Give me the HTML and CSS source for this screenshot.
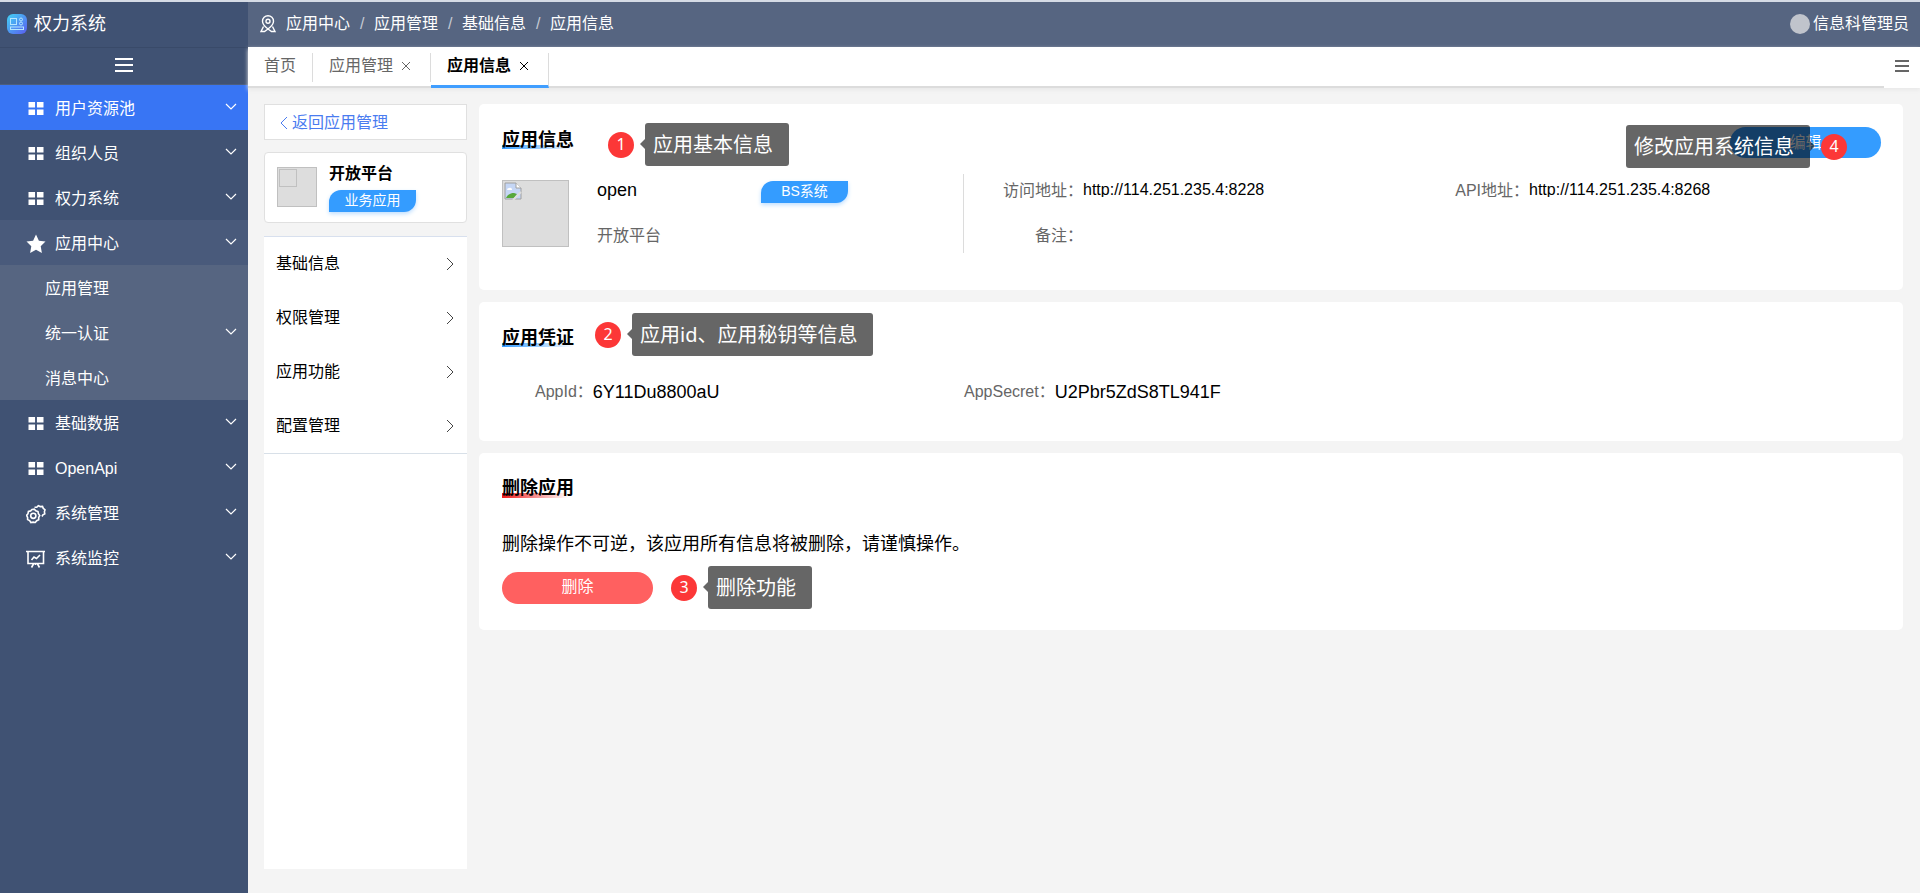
FILE: index.html
```html
<!DOCTYPE html>
<html lang="zh-CN">
<head>
<meta charset="UTF-8">
<title>权力系统</title>
<link rel="stylesheet" href="styles.css">
</head>
<body>
<svg class="sprite" aria-hidden="true">
  <symbol id="grid" viewBox="0 0 16 16"><path d="M0 1h7v6H0zM9 1h7v6H9zM0 9h7v6H0zM9 9h7v6H9z" fill="currentColor"/></symbol>
  <symbol id="down" viewBox="0 0 12 12"><path d="M1 3l5 5 5-5" fill="none" stroke="currentColor" stroke-width="1.2"/></symbol>
  <symbol id="right" viewBox="0 0 12 12"><path d="M3 0l6 6-6 6" fill="none" stroke="currentColor"/></symbol>
  <symbol id="close" viewBox="0 0 10 10"><path d="M1 1l8 8M9 1l-8 8" fill="none" stroke="currentColor"/></symbol>
</svg>
<div class="app">
  <aside class="sidebar">
    <div class="brand">
      <svg class="brand-logo" viewBox="0 0 20 20"><defs><linearGradient id="lg" x1="0" y1="0" x2="1" y2="1"><stop offset="0" stop-color="#42d3f5"/><stop offset="1" stop-color="#5a5cf0"/></linearGradient></defs><rect width="20" height="20" rx="6" fill="url(#lg)"/><g fill="none" stroke="#b5e6ff" stroke-width="1"><rect x="3.500" y="4.500" width="6" height="6"/><circle cx="14" cy="5.500" r="1.500"/><circle cx="14" cy="9.500" r="1.500"/><rect x="3.500" y="13" width="13" height="2.500"/></g></svg>
      <span>权力系统</span>
    </div>
    <button class="collapse" aria-label="折叠菜单"><svg width="18" height="16" viewBox="0 0 18 16"><path d="M0 2h18M0 8h18M0 14h18" stroke="currentColor" stroke-width="2"/></svg></button>
    <nav class="menu">
      <a class="item active" href="#"><svg class="ico"><use href="#grid"/></svg><span>用户资源池</span><svg class="arrow"><use href="#down"/></svg></a>
      <a class="item" href="#"><svg class="ico"><use href="#grid"/></svg><span>组织人员</span><svg class="arrow"><use href="#down"/></svg></a>
      <a class="item" href="#"><svg class="ico"><use href="#grid"/></svg><span>权力系统</span><svg class="arrow"><use href="#down"/></svg></a>
      <a class="item open" href="#"><svg class="ico large" viewBox="0 0 20 20"><path d="M10 0.500l2.900 6.300 6.600.8-4.800 4.600 1.200 6.800L10 15.700 4.100 19l1.200-6.800L.5 7.600l6.600-.8z" fill="currentColor"/></svg><span>应用中心</span><svg class="arrow"><use href="#down"/></svg></a>
      <div class="submenu">
        <a class="item" href="#"><span>应用管理</span></a>
        <a class="item" href="#"><span>统一认证</span><svg class="arrow"><use href="#down"/></svg></a>
        <a class="item" href="#"><span>消息中心</span></a>
      </div>
      <a class="item" href="#"><svg class="ico"><use href="#grid"/></svg><span>基础数据</span><svg class="arrow"><use href="#down"/></svg></a>
      <a class="item" href="#"><svg class="ico"><use href="#grid"/></svg><span>OpenApi</span><svg class="arrow"><use href="#down"/></svg></a>
      <a class="item" href="#"><svg class="ico large" viewBox="0 0 20 20" fill="none" stroke="currentColor" stroke-width="1.600"><path d="M6 5.500l2.300-.3 1.500 1.600 2.200.7.400 2.200 1.300 1.800-1 2 0 2.200-2 1-1.400 1.800-2.200-.4-2.200.4-1.300-1.900-2-1 0-2.200-1-2 1.400-1.700.4-2.300 2.200-.5z"/><circle cx="7.300" cy="11.800" r="2.600"/><path d="M8.500 3.200l2.300 0 1.500-1.500 2 .9 2.200-.2.800 2 1.700 1.300-.6 2.100.4 2.100-1.900 1-.9 1.600"/></svg><span>系统管理</span><svg class="arrow"><use href="#down"/></svg></a>
      <a class="item" href="#"><svg class="ico large" viewBox="0 0 20 20" fill="none" stroke="currentColor" stroke-width="1.600"><path d="M0 2.500h19M2 3v11.500h15.500V3M9.500 14.500V16M7.500 15l-2 3.500M11.500 15l2 3.500M5.500 11L8 8l2.500 1.500L14 6"/></svg><span>系统监控</span><svg class="arrow"><use href="#down"/></svg></a>
    </nav>
  </aside>
  <div class="main">
    <header class="topbar">
      <svg width="16" height="18" viewBox="0 0 16 18" fill="none" stroke="currentColor" stroke-width="1.400"><path d="M8 14C4 11 2.500 8.800 2.500 6.200a5.500 5.500 0 0111 0C13.500 8.800 12 11 8 14z"/><circle cx="8" cy="6.200" r="2"/><path d="M3.500 11.500L1 16.500h3.500L8 14l3.500 2.500H15l-2.500-5"/></svg>
      <nav class="crumbs"><a href="#">应用中心</a><i>/</i><a href="#">应用管理</a><i>/</i><a href="#">基础信息</a><i>/</i><a href="#">应用信息</a></nav>
      <div class="user"><span class="avatar"></span><span>信息科管理员</span></div>
    </header>
    <div class="tabs">
      <a class="tab home" href="#">首页</a>
      <a class="tab" href="#">应用管理<svg class="close"><use href="#close"/></svg></a>
      <a class="tab current" href="#">应用信息<svg class="close"><use href="#close"/></svg></a>
      <button class="tabs-menu" aria-label="标签菜单"><svg width="14" height="12" viewBox="0 0 14 12"><path d="M0 1h14M0 6h14M0 11h14" stroke="currentColor" stroke-width="2"/></svg></button>
    </div>
    <div class="content">
      <section class="side">
        <a class="back" href="#"><svg width="8" height="12" viewBox="0 0 8 12"><path d="M7 0L1 6l6 6" fill="none" stroke="currentColor"/></svg><span>返回应用管理</span></a>
        <div class="app-card">
          <div class="thumb"><span></span></div>
          <div><h3>开放平台</h3><span class="tag">业务应用</span></div>
        </div>
        <nav class="side-menu">
          <a href="#">基础信息<svg class="arrow"><use href="#right"/></svg></a>
          <a href="#">权限管理<svg class="arrow"><use href="#right"/></svg></a>
          <a href="#">应用功能<svg class="arrow"><use href="#right"/></svg></a>
          <a href="#">配置管理<svg class="arrow"><use href="#right"/></svg></a>
        </nav>
        <div class="side-fill"></div>
      </section>
      <main class="cards">
        <section class="card info">
          <h2 class="title">应用信息</h2>
          <div class="note note-1"><b>1</b><p>应用基本信息</p></div>
          <button class="edit">编辑</button>
          <div class="note note-4"><p>修改应用系统信息</p><b>4</b></div>
          <div class="info-row">
            <div class="summary">
              <div class="picture"><svg width="18" height="18" viewBox="0 0 18 18"><path d="M1 1h11l5 5v11H1z" fill="#c5d6f5" stroke="#a0a0a0"/><path d="M12 1v5h5" fill="#fff" stroke="#a0a0a0"/><path d="M3 8a2 2 0 012-2 2 2 0 013 2z" fill="#fff"/><path d="M2 16c2-4 5-5 8-5l3 1-3 4z" fill="#57a83c"/><path d="M9 18l8-8" stroke="#ddd" stroke-width="2"/></svg></div>
              <div class="names"><span class="name">open</span><span class="sub">开放平台</span></div>
              <span class="tag">BS系统</span>
            </div>
            <dl class="fields"><dt>访问地址：</dt><dd>http://114.251.235.4:8228</dd><dt>备注：</dt><dd></dd></dl>
            <dl class="fields"><dt>API地址：</dt><dd>http://114.251.235.4:8268</dd></dl>
          </div>
        </section>
        <section class="card secret">
          <h2 class="title">应用凭证</h2>
          <div class="note note-2"><b>2</b><p>应用id、应用秘钥等信息</p></div>
          <div class="keys">
            <dl><dt>AppId：</dt><dd>6Y11Du8800aU</dd></dl>
            <dl><dt>AppSecret：</dt><dd>U2Pbr5ZdS8TL941F</dd></dl>
          </div>
        </section>
        <section class="card remove">
          <h2 class="title danger">删除应用</h2>
          <p class="warning">删除操作不可逆，该应用所有信息将被删除，请谨慎操作。</p>
          <div class="remove-row"><button class="delete">删除</button><div class="note"><b>3</b><p>删除功能</p></div></div>
        </section>
      </main>
    </div>
  </div>
</div>
</body>
</html>
```
FILE: styles.css
```css
* { box-sizing: border-box; }
body {
  margin: 0;
  font: 16px/24px "Liberation Sans", "Noto Sans CJK SC", sans-serif;
  color: #000;
  background: #f4f4f4;
}
h2, h3, p, dl, dd { margin: 0; }
a { color: inherit; text-decoration: none; }
button { border: 0; padding: 0; font: inherit; background: none; cursor: pointer; }
.sprite { position: absolute; width: 0; height: 0; }
.app { display: flex; min-height: 100vh; border-top: 2px solid #d5dbe5; }

/* Sidebar */
.sidebar { width: 248px; flex: none; background: #405273; color: #fff; }
.brand { display: flex; align-items: center; gap: 7px; height: 45px; padding: 0 7px 2px; font-size: 18px; }
.brand-logo { width: 20px; height: 20px; }
.collapse { display: flex; align-items: center; justify-content: center; width: 100%; height: 38px; padding-bottom: 2px; color: #fff; border-top: 1px solid #394a69; border-bottom: 1px solid #4d5e7d; }
.item { display: flex; align-items: center; height: 45px; padding: 2px 11px 0 26px; }
.item .ico { width: 20px; height: 15px; margin-right: 9px; }
.item .ico.large { height: 20px; }
.item .arrow { width: 12px; height: 12px; margin: 0 0 4px auto; }
.item.active { background: #3875f4; }
.item.open { background: #495a7b; }
.submenu { background: #566581; }
.submenu .item { padding-left: 45px; }

/* Header */
.main { flex: 1; min-width: 0; display: flex; flex-direction: column; }
.topbar { display: flex; align-items: center; gap: 10px; height: 45px; padding: 0 11px 2px 12px; background: #566581; color: #fff; }
.crumbs { display: flex; gap: 10px; }
.crumbs i { width: 4px; color: #c5cad4; font-style: normal; }
.user { display: flex; align-items: center; gap: 3px; margin-left: auto; }
.avatar { width: 20px; height: 20px; border-radius: 50%; background: #c0c4cc; }

.tabs { display: flex; height: 41px; padding-top: 6px; background: #fff; border-bottom: 2px solid #dcdcdc; box-shadow: 0 2px 4px #e8e8e8; }
.tab { display: flex; align-items: center; height: 29px; padding: 0 19px 4px 16px; color: #666; border-right: 1px solid #dcdcdc; }
.tab.home { padding-right: 16px; }
.tab .close { width: 10px; height: 10px; margin-left: 8px; }
.tab.current { height: 35px; margin-bottom: -2px; padding-bottom: 7px; color: #000; font-weight: bold; border-bottom: 3px solid #409eff; }
.tabs-menu { display: flex; align-items: center; justify-content: center; width: 36px; height: 35px; margin-left: auto; padding-bottom: 9px; color: #666; background: #fff; }

/* Left panel */
.content { display: flex; flex: 1; gap: 12px; padding: 16px 17px 24px 16px; }
.side { display: flex; flex-direction: column; width: 203px; flex: none; }
.back { display: flex; align-items: center; gap: 4px; height: 36px; padding: 2px 0 0 15px; color: #4a7cf0; background: #fff; border: 1px solid #e0e0e0; }
.app-card { display: flex; gap: 12px; height: 71px; margin-top: 12px; padding: 9px 12px; background: #fff; border: 1px solid #e0e0e0; border-radius: 4px; }
.thumb { width: 40px; height: 40px; margin-top: 5px; padding: 1px; background: #ddd; border: 1px solid #c0c0c0; }
.thumb span { display: block; width: 18px; height: 18px; border: 1px solid #c0c0c0; }
.app-card h3 { font-size: 16px; line-height: 24px; }
.tag { display: block; width: 87px; height: 22px; margin-top: 4px; color: #fff; background: #349cff; border-radius: 12px 0; box-shadow: 0 2px 4px #bfdfff; font-size: 14px; line-height: 20px; text-align: center; }
.side-menu { margin-top: 13px; background: #fff; border-top: 1px solid #d8e0ee; border-bottom: 1px solid #d8e0e8; }
.side-menu a { display: flex; align-items: center; justify-content: space-between; height: 54px; padding: 0 11px 0 12px; }
.side-menu .arrow { width: 12px; height: 12px; color: #444; }
.side-fill { flex: 1; background: #fff; }

/* Cards */
.cards { flex: 1; min-width: 0; display: flex; flex-direction: column; gap: 12px; }
.card { position: relative; padding: 24px 23px; background: #fff; border-radius: 5px; }
.title { display: table; font-size: 18px; line-height: 24px; background: linear-gradient(90deg, #349cff, #fff) 0 17px / 100% 4px no-repeat; }
.title.danger { background: linear-gradient(100deg, #ef1a1a, #fff) 0 17px / 66px 5px no-repeat; }
.info { height: 186px; }
.info-row { display: grid; grid-template-columns: 462px 446fr 470fr; margin-top: 22px; }
.summary { display: flex; align-items: flex-start; height: 79px; border-right: 1px solid #dcdcdc; padding-top: 6px; }
.picture { width: 67px; height: 67px; padding: 1px; background: #ddd; border: 1px solid #c0c0c0; }
.names { display: flex; flex-direction: column; gap: 24px; width: 164px; margin-left: 28px; }
.name { font-size: 18px; line-height: 20px; }
.sub { color: #666; }
.summary .tag { margin-top: 1px; }
.fields { display: grid; grid-template-columns: 119px 1fr; grid-auto-rows: 24px; row-gap: 21px; padding-top: 5px; align-content: start; }
.fields dt { text-align: right; color: #666; }
.fields dd { height: 18px; overflow: hidden; line-height: 22px; }
.edit { position: absolute; top: 23px; right: 22px; width: 151px; height: 31px; border-radius: 16px; background: #349cff; color: #fff; }
.secret { height: 139px; }
.keys { display: grid; grid-template-columns: 429px 1fr; margin-top: 30px; }
.keys dl { display: flex; padding-left: 33px; }
.keys dt { color: #666; }
.keys dd { font-size: 18px; }
.remove { height: 177px; padding-top: 23px; }
.warning { margin-top: 32px; font-size: 18px; }
.remove-row { display: flex; align-items: center; gap: 18px; margin-top: 10px; height: 43px; }
.delete { width: 151px; height: 32px; padding-bottom: 2px; border-radius: 16px; background: #ff6060; color: #fff; }

/* Numbered annotations */
.note { display: flex; align-items: center; gap: 11px; }
.note b { width: 26px; height: 26px; border-radius: 50%; background: #fc3737; color: #fff; font: 16px/24px "Noto Sans", sans-serif; text-align: center; }
.note p { position: relative; height: 43px; padding: 0 16px 0 8px; border-radius: 3px; background: #666; color: #fff; font-family: "Noto Sans", "Noto Sans CJK SC", sans-serif; font-size: 20px; line-height: 44px; white-space: nowrap; }
.note p::before { content: ""; position: absolute; top: 16px; left: -5px; border: solid transparent; border-width: 5px 5px 5px 0; border-right-color: #666; }
.note-1 { position: absolute; top: 19px; left: 129px; }
.note-2 { position: absolute; top: 11px; left: 116px; }
.note-4 { position: absolute; top: 21px; right: 56px; }
.note-4 p { background: rgba(0, 0, 0, .6); }
.note-4 p::before { left: 100%; border-width: 5px 0 5px 5px; border-color: transparent transparent transparent rgba(0, 0, 0, .6); }
```
